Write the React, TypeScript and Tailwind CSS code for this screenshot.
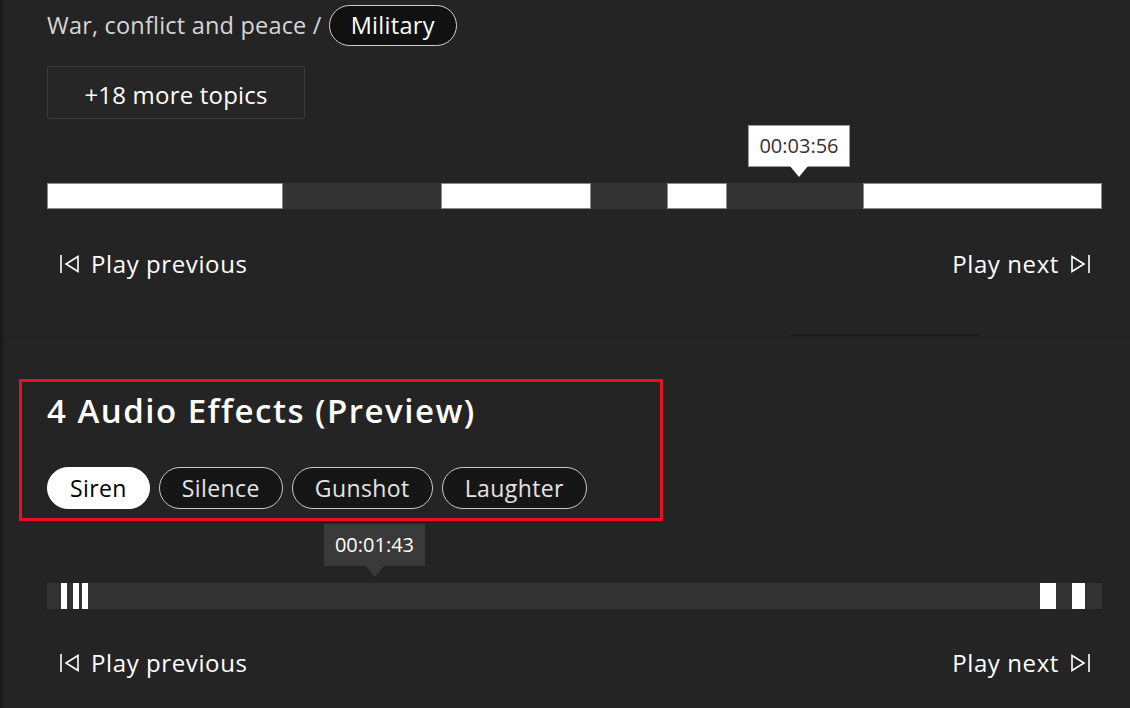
import { ReactNode } from "react";

const FONT = "font-['Open_Sans','Noto_Sans',sans-serif]";

type Seg = { w: number; on: boolean };

const topSegments: Seg[] = [
  { w: 236, on: true },
  { w: 158, on: false },
  { w: 150, on: true },
  { w: 76, on: false },
  { w: 60, on: true },
  { w: 136, on: false },
  { w: 239, on: true },
];

const PrevIcon = () => (
  <svg width="22" height="22" viewBox="0 0 22 22" fill="none" stroke="currentColor" strokeWidth="1.6">
    <line x1="2" y1="2" x2="2" y2="20" />
    <path d="M19 3.5 L7 11 L19 18.5 Z" strokeLinejoin="miter" />
  </svg>
);

const NextIcon = () => (
  <svg width="22" height="22" viewBox="0 0 22 22" fill="none" stroke="currentColor" strokeWidth="1.6">
    <path d="M3 3.5 L15 11 L3 18.5 Z" strokeLinejoin="miter" />
    <line x1="20" y1="2" x2="20" y2="20" />
  </svg>
);

const PlayRow = () => (
  <div className="flex items-center justify-between h-[40px] pl-[12px] pr-[11px] text-[24px] tracking-[0.6px] text-white">
    <button className="flex items-center gap-[10px]">
      <PrevIcon />
      <span>Play previous</span>
    </button>
    <button className="flex items-center gap-[10px]">
      <span>Play next</span>
      <NextIcon />
    </button>
  </div>
);

const Tooltip = ({
  left,
  light,
  children,
}: {
  left: number;
  light?: boolean;
  children: ReactNode;
}) => (
  <div className="absolute bottom-[calc(100%+6px)] flex flex-col items-center" style={{ left }}>
    <div
      className={
        light
          ? "h-[42px] w-[102px] flex items-center justify-center bg-white border border-[#9a9a9a] text-[#333] text-[20px]"
          : "h-[42px] w-[101px] flex items-center justify-center bg-[#3a3a3a] text-white text-[20px]"
      }
    >
      {children}
    </div>
    <div
      className={
        light
          ? "w-0 h-0 border-x-[9px] border-x-transparent border-t-[11px] border-t-white -mt-px"
          : "w-0 h-0 border-x-[9px] border-x-transparent border-t-[11px] border-t-[#3a3a3a]"
      }
    />
  </div>
);

const Chip = ({ label, active }: { label: string; active?: boolean }) => (
  <span
    className={
      active
        ? "h-[42px] px-[22px] flex items-center rounded-full bg-white text-black text-[23px] tracking-[0.4px] border border-white"
        : "h-[42px] px-[22px] flex items-center rounded-full bg-[#161616] text-[#e4e4e4] text-[23px] tracking-[0.4px] border border-[#c8c8c8]"
    }
  >
    {label}
  </span>
);

export default function App() {
  return (
    <div className={`${FONT} w-[1130px] h-[708px] overflow-hidden bg-[#242424] border-l-[3px] border-[#1a1a1a]`}>
      {/* Topic section */}
      <section className="relative h-[338px] border-b border-[#1a1a1a] pt-[5px] pl-[44px] pr-[28px]">
        <div className="flex items-center gap-[7px] h-[41px]">
          <span className="text-[23.5px] tracking-[0.2px] text-[#d6d6d6]">War, conflict and peace /</span>
          <span className="h-[41px] px-[21px] flex items-center rounded-full bg-[#111] border border-[#d0d0d0] text-white text-[23.5px] tracking-[0.3px]">
            Military
          </span>
        </div>
        <button className="mt-[20px] w-[258px] h-[53px] pt-[4px] border border-[#3c3c3c] rounded-[2px] bg-[#262626] text-white text-[24px] tracking-[0.2px]">
          +18 more topics
        </button>

        <div className="relative mt-[64px] h-[26px] flex">
          {topSegments.map((s, i) => (
            <div
              key={i}
              className={s.on ? "h-full bg-white border border-[#8a8a8a]" : "h-full bg-[#333333]"}
              style={{ width: s.w }}
            />
          ))}
          <Tooltip left={701} light>
            00:03:56
          </Tooltip>
        </div>

        <div className="mt-[35px]">
          <PlayRow />
        </div>

        <div className="absolute left-[788px] bottom-[1px] w-[189px] h-[2px] bg-[#1c1c1c]" />
      </section>

      {/* Audio effects section */}
      <section className="pl-[16px] pr-[28px]">
        <div className="mt-[41px] w-[644px] border-[3px] border-[#e81123] pt-[9px] pb-[9px] pl-[25px]">
          <h2 className="text-[33px] leading-[40px] tracking-[1.5px] font-semibold text-white">
            4 Audio Effects (Preview)
          </h2>
          <div className="mt-[36px] flex gap-[9px]">
            <Chip label="Siren" active />
            <Chip label="Silence" />
            <Chip label="Gunshot" />
            <Chip label="Laughter" />
          </div>
        </div>

        <div className="ml-[28px] relative mt-[62px] h-[26px] bg-[#333333]">
          <div className="absolute top-0 left-[14px] w-[6px] h-full bg-white" />
          <div className="absolute top-0 left-[26px] w-[6px] h-full bg-white" />
          <div className="absolute top-0 left-[35px] w-[6px] h-full bg-white" />
          <div className="absolute top-0 left-[993px] w-[16px] h-full bg-white" />
          <div className="absolute top-0 left-[1025px] w-[13px] h-full bg-white" />
          <Tooltip left={277}>00:01:43</Tooltip>
        </div>

        <div className="ml-[28px] mt-[34px]">
          <PlayRow />
        </div>
      </section>
    </div>
  );
}
